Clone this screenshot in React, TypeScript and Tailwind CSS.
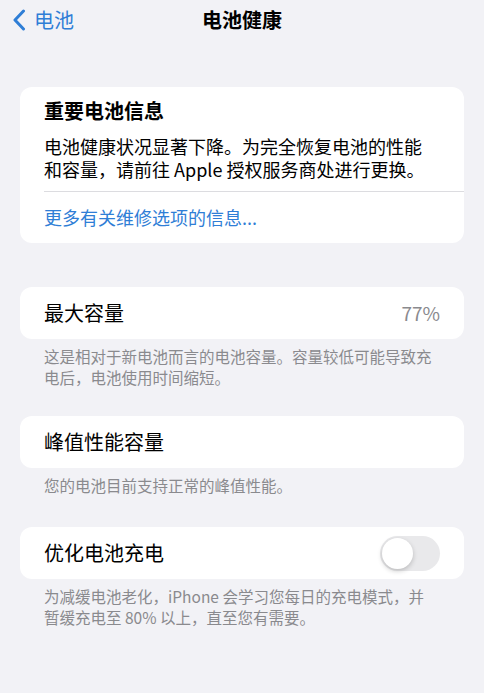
import React, { useState } from 'react';

const font = { fontFamily: '"PingFang SC", "Noto Sans CJK SC", "Noto Sans", sans-serif' };

const Footnote: React.FC<{ children: React.ReactNode }> = ({ children }) => (
    <p className="pl-[44px] pr-[50px] pt-[7px] text-[15.5px] leading-[21px] text-[#8a8a8e]">{children}</p>
);

const App: React.FC = () => {
    const [optimized, setOptimized] = useState(false);

    return (
        <div className="min-h-[693px] w-full bg-[#f2f2f6] text-black" style={font}>
            {/* nav bar */}
            <div className="relative flex h-[40px] items-center">
                <button type="button" className="flex items-center gap-[8px] pl-[12px] text-[#2f7ed6]">
                    <svg width="14" height="22" viewBox="0 0 14 22" fill="none">
                        <path d="M11.5 2L3 11l8.5 9" stroke="currentColor" strokeWidth="3" strokeLinecap="round" strokeLinejoin="round" />
                    </svg>
                    <span className="text-[20px] leading-[28px]">电池</span>
                </button>
                <h1 className="absolute left-1/2 -translate-x-1/2 text-[20px] font-semibold leading-[28px]">电池健康</h1>
            </div>

            <div className="mt-[47px] px-[20px]">
                {/* important info */}
                <div className="rounded-[12px] bg-white">
                    <div className="pl-[24px] pr-[32px] pt-[10px] pb-[10px]">
                        <h2 className="text-[20px] font-semibold leading-[28px]">重要电池信息</h2>
                        <p className="mt-[10px] text-[18px] leading-[23px]">
                            电池健康状况显著下降。为完全恢复电池的性能和容量，请前往 Apple 授权服务商处进行更换。
                        </p>
                    </div>
                    <div className="ml-[24px] h-px bg-[#dcdce0]" />
                    <div className="flex h-[51px] items-center pl-[24px] text-[18px] text-[#2f7ed6]">
                        更多有关维修选项的信息...
                    </div>
                </div>

                {/* max capacity */}
                <div className="mt-[44px] flex h-[52px] items-center justify-between rounded-[12px] bg-white pl-[24px] pr-[24px]">
                    <span className="text-[20px]">最大容量</span>
                    <span className="text-[19px] text-[#8a8a8e]">77%</span>
                </div>
            </div>
            <Footnote>这是相对于新电池而言的电池容量。容量较低可能导致充电后，电池使用时间缩短。</Footnote>

            <div className="mt-[28px] px-[20px]">
                <div className="flex h-[52px] items-center rounded-[12px] bg-white pl-[24px]">
                    <span className="text-[20px]">峰值性能容量</span>
                </div>
            </div>
            <Footnote>您的电池目前支持正常的峰值性能。</Footnote>

            <div className="mt-[31px] px-[20px]">
                <div className="flex h-[52px] items-center justify-between rounded-[12px] bg-white pl-[24px] pr-[24px]">
                    <span className="text-[20px]">优化电池充电</span>
                    <button
                        type="button"
                        onClick={() => setOptimized(!optimized)}
                        className={`relative h-[35px] w-[60px] rounded-full p-[2px] ${optimized ? 'bg-[#34c759]' : 'bg-[#e9e9eb]'}`}
                    >
                        <span
                            className={`block h-[31px] w-[31px] rounded-full bg-white shadow-[0_2px_5px_rgba(0,0,0,0.2)] ${optimized ? 'translate-x-[25px]' : ''}`}
                        />
                    </button>
                </div>
            </div>
            <Footnote>为减缓电池老化，iPhone 会学习您每日的充电模式，并暂缓充电至 80% 以上，直至您有需要。</Footnote>
        </div>
    );
};

export default App;
